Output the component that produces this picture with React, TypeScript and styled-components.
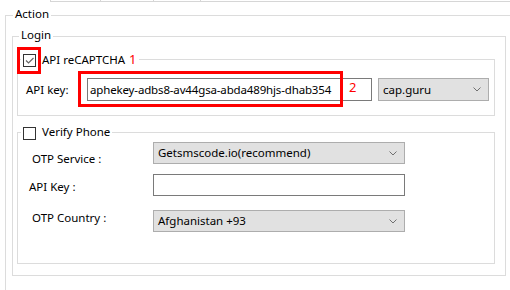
import styled, { createGlobalStyle } from 'styled-components';

const FONT = `'Noto Sans', 'Open Sans', sans-serif`;
const LINE = '#dcdcdc';
const RED = '#ff0000';

const GlobalStyle = createGlobalStyle`
  html, body {
    margin: 0;
    padding: 0;
    background: #fff;
    overflow: hidden;
  }
  body {
    font-family: ${FONT};
    font-size: 11.5px;
    color: #000;
  }
`;

const Page = styled.div`
  width: 510px;
  height: 290px;
  overflow: hidden;
  padding-left: 5px;
  box-sizing: border-box;
`;

// bottom edge of the grid header that sits above this panel
const HeaderStrip = styled.div`
  display: flex;
  margin-left: 45px;
  height: 1px;
  border-bottom: 1px solid #d6d6d6;
`;

const HeaderCell = styled.div<{ $w?: number }>`
  border-left: 1px solid #d6d6d6;
  ${({ $w }) => ($w ? `width: ${$w}px;` : 'flex: 1;')}
`;

const GroupBox = styled.div<{ $w: number; $h: number; $mt: number; $ml: number }>`
  box-sizing: border-box;
  width: ${({ $w }) => $w}px;
  height: ${({ $h }) => $h}px;
  margin: ${({ $mt }) => $mt}px 0 0 ${({ $ml }) => $ml}px;
  border: 1px solid ${LINE};
  display: flex;
  flex-direction: column;
  align-items: flex-start;
`;

const GroupTitle = styled.div<{ $ml: number; $mt?: number }>`
  display: flex;
  align-items: flex-start;
  gap: 6px;
  margin: ${({ $mt }) => $mt ?? -10}px 0 0 ${({ $ml }) => $ml}px;
  padding: 0 2px;
  height: 16px;
  line-height: 16px;
  background: #fff;
  white-space: nowrap;
`;

const CheckWrap = styled.span`
  position: relative;
  margin-top: 3px;
  display: block;
`;

const CheckBox = styled.span`
  display: flex;
  align-items: center;
  justify-content: center;
  box-sizing: border-box;
  width: 13px;
  height: 13px;
  border: 1px solid #333;
  background: #fff;
`;

const Annotation = styled.span<{ $l: number; $t: number; $w: number; $h: number }>`
  position: absolute;
  left: ${({ $l }) => $l}px;
  top: ${({ $t }) => $t}px;
  width: ${({ $w }) => $w}px;
  height: ${({ $h }) => $h}px;
  box-sizing: border-box;
  border: 3px solid ${RED};
  pointer-events: none;
`;

const Mark = styled.span`
  color: ${RED};
  font-size: 13px;
  margin-left: 4px;
`;

const FloatMark = styled(Mark)`
  position: absolute;
  left: 262px;
  top: 1px;
  line-height: 16px;
  margin: 0;
`;

const KeyRow = styled.div`
  display: flex;
  align-items: center;
  margin-top: 11px;
  padding-left: 8px;
`;

const KeyLabel = styled.span`
  width: 61px;
  line-height: 16px;
`;

const InputWrap = styled.div`
  position: relative;
`;

const TextBox = styled.input<{ $w: number; $h: number }>`
  box-sizing: border-box;
  display: block;
  width: ${({ $w }) => $w}px;
  height: ${({ $h }) => $h}px;
  margin: 0;
  padding: 0 2px;
  border: 1px solid #7a7a7a;
  background: #fff;
  font-family: ${FONT};
  font-size: 11.5px;
  letter-spacing: -0.15px;
  color: #000;
  outline: none;
`;

const Combo = styled.div<{ $w: number; $h: number; $ml?: number }>`
  box-sizing: border-box;
  width: ${({ $w }) => $w}px;
  height: ${({ $h }) => $h}px;
  margin-left: ${({ $ml }) => $ml ?? 0}px;
  display: flex;
  align-items: center;
  justify-content: space-between;
  padding: 0 7px 0 4px;
  background: #e1e1e1;
  border: 1px solid #adadad;
  line-height: 16px;
  white-space: nowrap;
`;

const FormRow = styled.div<{ $mt: number }>`
  display: flex;
  align-items: flex-start;
  margin-top: ${({ $mt }) => $mt}px;
  padding-left: 14px;
`;

const FormLabel = styled.span<{ $dx?: number; $dy: number }>`
  width: 121px;
  margin-left: ${({ $dx }) => $dx ?? 0}px;
  margin-right: ${({ $dx }) => -($dx ?? 0)}px;
  margin-top: ${({ $dy }) => $dy}px;
  line-height: 16px;
`;

const Chevron = () => (
  <svg width="8" height="5" viewBox="0 0 8 5">
    <path d="M0.5 0.5 L4 4 L7.5 0.5" fill="none" stroke="#707070" strokeWidth="1" />
  </svg>
);

const Check = ({ checked }: { checked?: boolean }) => (
  <CheckBox>
    {checked && (
      <svg width="11" height="11" viewBox="0 0 11 11">
        <path d="M2 5.5 L4.5 8 L9.5 3" fill="none" stroke="#666" strokeWidth="1.2" />
      </svg>
    )}
  </CheckBox>
);

export default function App() {
  return (
    <Page>
      <GlobalStyle />
      <HeaderStrip>
        <HeaderCell $w={49} />
        <HeaderCell $w={52} />
        <HeaderCell $w={46} />
        <HeaderCell />
      </HeaderStrip>

      <GroupBox $w={520} $h={300} $mt={13} $ml={0}>
        <GroupTitle $ml={7}>Action</GroupTitle>

        <GroupBox $w={494} $h={240} $mt={14} $ml={6}>
          <GroupTitle $ml={6}>Login</GroupTitle>

          <GroupBox $w={478} $h={57} $mt={16} $ml={4}>
            <GroupTitle $ml={3} $mt={-9}>
              <CheckWrap>
                <Check checked />
                <Annotation $l={-6} $t={-7} $w={24} $h={27} />
              </CheckWrap>
              <span>
                API reCAPTCHA<Mark>1</Mark>
              </span>
            </GroupTitle>
            <KeyRow>
              <KeyLabel>API key:</KeyLabel>
              <InputWrap>
                <TextBox
                  $w={285}
                  $h={23}
                  readOnly
                  value="aphekey-adbs8-av44gsa-abda489hjs-dhab354"
                />
                <Annotation $l={-9} $t={-7} $w={265} $h={36} />
                <FloatMark>2</FloatMark>
              </InputWrap>
              <Combo $w={111} $h={23} $ml={6}>
                cap.guru
                <Chevron />
              </Combo>
            </KeyRow>
          </GroupBox>

          <GroupBox $w={478} $h={132} $mt={16} $ml={4}>
            <GroupTitle $ml={3} $mt={-9}>
              <CheckWrap>
                <Check />
              </CheckWrap>
              <span>Verify Phone</span>
            </GroupTitle>
            <FormRow $mt={2}>
              <FormLabel $dy={9}>OTP Service :</FormLabel>
              <Combo $w={252} $h={22}>
                Getsmscode.io(recommend)
                <Chevron />
              </Combo>
            </FormRow>
            <FormRow $mt={7}>
              <FormLabel $dx={-3} $dy={5}>API Key :</FormLabel>
              <TextBox $w={252} $h={22} readOnly value="" />
            </FormRow>
            <FormRow $mt={14}>
              <FormLabel $dy={0}>OTP Country :</FormLabel>
              <Combo $w={252} $h={22}>
                Afghanistan +93
                <Chevron />
              </Combo>
            </FormRow>
          </GroupBox>
        </GroupBox>
      </GroupBox>
    </Page>
  );
}
